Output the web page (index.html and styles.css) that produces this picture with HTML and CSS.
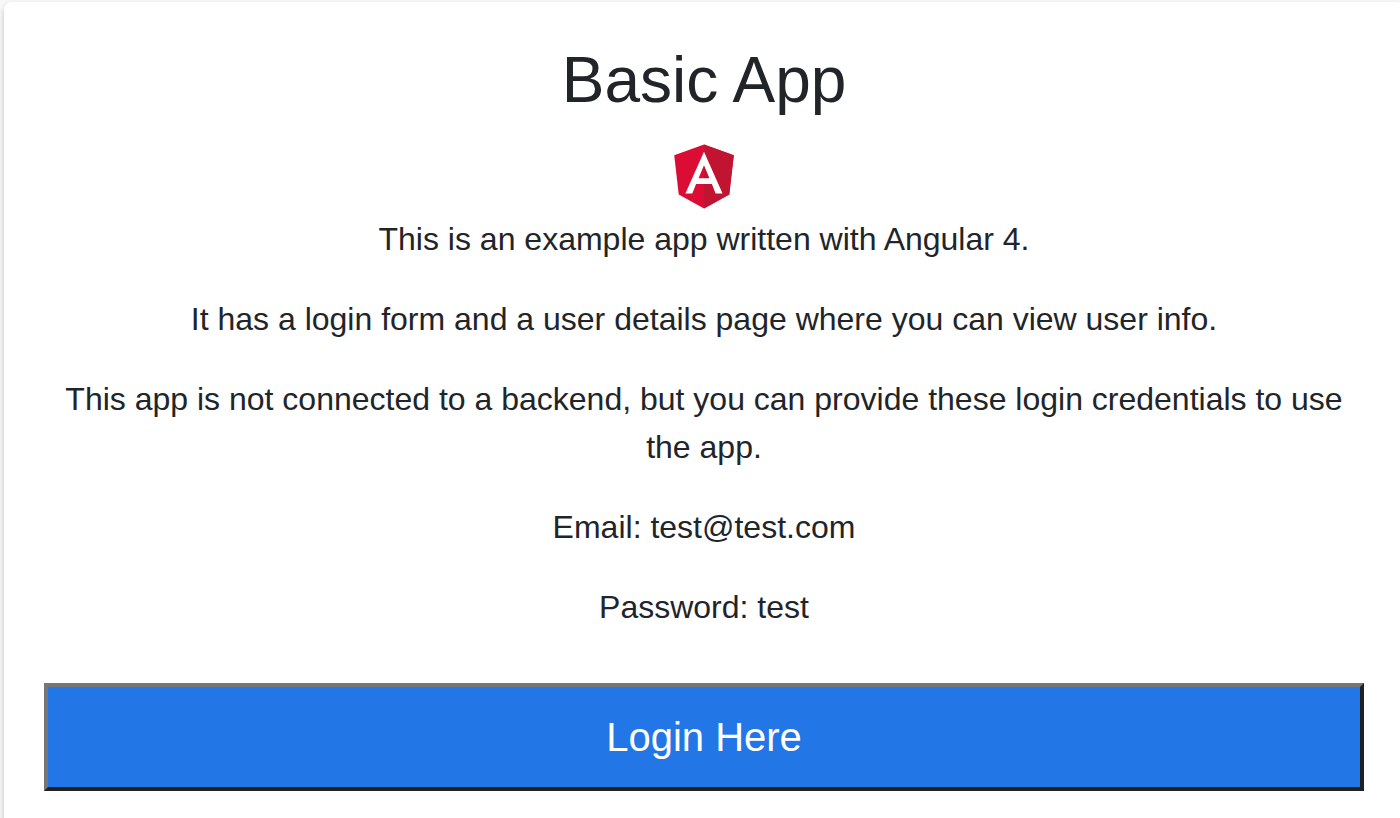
FILE: index.html
```
<!DOCTYPE html>
<html lang="en">
<head>
<meta charset="utf-8">
<meta name="viewport" content="width=device-width, initial-scale=1">
<title>Basic App</title>
<link rel="stylesheet" href="styles.css">
</head>
<body>
<main class="card">
  <h1 class="title">Basic App</h1>
  <svg class="logo" viewBox="0 0 250 250" role="img" aria-label="Angular">
    <path fill="#dc0d35" d="M125 30 31.9 63.2l14.2 123.1L125 230l78.9-43.7 14.2-123.1z"/>
    <path fill="#c01430" d="M125 30v200l78.9-43.7 14.2-123.1z"/>
    <path fill="#fff" d="M125 52.1 66.8 182.6h21.7l11.7-29.2h49.4l11.7 29.2H183zm17 83.3h-34l17-40.9z"/>
  </svg>
  <p class="text">This is an example app written with Angular 4.</p>
  <p class="text">It has a login form and a user details page where you can view user info.</p>
  <p class="text">This app is not connected to a backend, but you can provide these login credentials to use the app.</p>
  <p class="text">Email: test@test.com</p>
  <p class="text">Password: test</p>
  <button class="login" type="button">Login Here</button>
</main>
</body>
</html>
```
FILE: styles.css
```
* {
  box-sizing: border-box;
}

body {
  margin: 0;
  background: #fafafa;
  color: #212529;
  font-family: "Liberation Sans", Arial, sans-serif;
  font-size: 32px;
  line-height: 48px;
  overflow-x: hidden;
}

.card {
  min-height: 100vh;
  margin: 2px -4px 0 4px;
  padding: 40px;
  border-radius: 8px;
  background: #fff;
  text-align: center;
  box-shadow: 0 6px 2px -4px rgba(0, 0, 0, 0.2), 0 4px 4px 0 rgba(0, 0, 0, 0.14), 0 2px 10px 0 rgba(0, 0, 0, 0.12);
}

.title {
  margin: 0 0 16px;
  font-size: 64px;
  font-weight: 400;
  line-height: 77px;
}

.logo {
  display: block;
  width: 80px;
  height: 80px;
  margin: 0 auto;
}

.text {
  margin: 0 0 32px;
}

.login {
  display: block;
  width: 100%;
  margin-top: 52px;
  padding: 20px;
  border: 4px solid;
  border-color: #767676 #212121 #212121 #767676;
  background: #2376e5;
  color: #fff;
  font: inherit;
  font-size: 40px;
  line-height: 60px;
}
```
